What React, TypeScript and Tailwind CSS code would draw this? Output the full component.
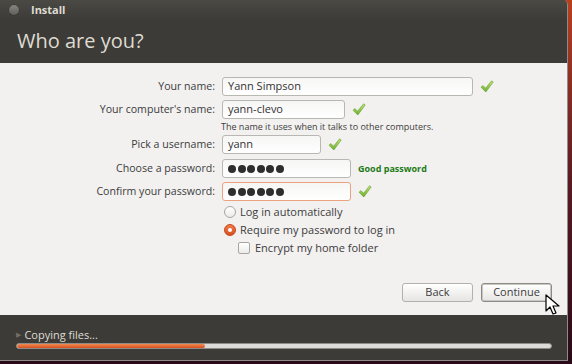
import React from 'react';

const font = { fontFamily: '"Open Sans", "DejaVu Sans", sans-serif' };

const Check = () => (
  <svg width="14" height="13" viewBox="0 0 14 13" className="shrink-0">
    <defs>
      <linearGradient id="ck" x1="0" y1="0" x2="0" y2="1">
        <stop offset="0" stopColor="#c4e77a" />
        <stop offset="1" stopColor="#6aae2a" />
      </linearGradient>
    </defs>
    <path d="M1 7.2 L3 5.6 L5.6 8.2 L11.6 0.8 L13.2 2 L5.8 12 Z" fill="url(#ck)" stroke="#5f9a28" strokeWidth="0.6" strokeLinejoin="round" />
  </svg>
);

const Field = ({ label, width, children, check, extra, orange }: { label: string; width: string; children: React.ReactNode; check?: boolean; extra?: React.ReactNode; orange?: boolean }) => (
  <div className="flex h-[19px] items-center">
    <div className="w-[216px] shrink-0 pr-[1px] text-right text-[10.6px] text-[#3c3c3c]">{label}</div>
    <div className="ml-[6px] flex items-center">
      <div className={`flex h-[19px] ${width} items-center rounded-[3px] border bg-gradient-to-b from-[#f6f6f5] to-white pl-[5px] text-[11px] text-[#333] ${orange ? 'border-[#eca27f]' : 'border-[#b9b7b2]'}`}>
        {children}
      </div>
      {check && <div className="ml-[7px]"><Check /></div>}
      {extra}
    </div>
  </div>
);

const Dots = () => (
  <span className="flex gap-[1.5px]">
    {[0, 1, 2, 3, 4, 5].map((i) => (
      <span key={i} className="h-[8px] w-[8px] rounded-full bg-[#2e2e2e]" />
    ))}
  </span>
);

export default function App() {
  return (
    <div className="relative h-[364px] w-[572px] overflow-hidden bg-gradient-to-b from-[#b8401f] via-[#5a1a22] to-[#2a0a18]" style={font}>
      <div className="flex h-[361px] w-[568px] flex-col overflow-hidden rounded-tr-[5px] border-b border-r border-[#8e8c88] bg-[#3c3b37]">
        {/* title bar */}
        <div className="flex h-[20px] items-center bg-gradient-to-b from-[#4a4944] to-[#3c3b37]">
          <div className="ml-[8px] h-[12px] w-[12px] rounded-full bg-gradient-to-b from-[#8a8883] to-[#5e5c58] shadow-[inset_0_0_0_1px_#35342f]" />
          <div className="ml-[11px] text-[11px] font-bold text-[#dfdbd2]">Install</div>
        </div>
        <div className="flex h-[43px] items-center pb-[2px] pl-[17px] text-[20px] text-[#dfdbd2]">Who are you?</div>

        {/* content */}
        <div className="flex h-[252px] flex-col bg-[#f2f1f0] pt-[14px]">
          <Field label="Your name:" width="w-[251px]" check>Yann Simpson</Field>
          <div className="mt-[4px]">
            <Field label="Your computer's name:" width="w-[123px]" check>yann-clevo</Field>
          </div>
          <div className="flex h-[16px] items-center pl-[221px] pb-[1px] text-[9px] text-[#3c3c3c]">The name it uses when it talks to other computers.</div>
          <Field label="Pick a username:" width="w-[99px]" check>yann</Field>
          <div className="mt-[5px]">
            <Field label="Choose a password:" width="w-[129px]" extra={<span className="ml-[7px] text-[9px] font-bold text-[#1d7a17]">Good password</span>}><Dots /></Field>
          </div>
          <div className="mt-[4px]">
            <Field label="Confirm your password:" width="w-[129px]" check orange><Dots /></Field>
          </div>

          <div className="mt-[2px] flex flex-col pl-[224px] text-[11px] text-[#3c3c3c]">
            <div className="flex h-[18px] items-center">
              <span className="h-[12px] w-[12px] rounded-full border border-[#a8a6a1] bg-gradient-to-b from-white to-[#ecebe9]" />
              <span className="ml-[4px]">Log in automatically</span>
            </div>
            <div className="flex h-[18px] items-center">
              <span className="flex h-[12px] w-[12px] items-center justify-center rounded-full border border-[#c4481c] bg-gradient-to-b from-[#f27a48] to-[#d9501f]">
                <span className="h-[4px] w-[4px] rounded-full bg-white" />
              </span>
              <span className="ml-[4px]">Require my password to log in</span>
            </div>
            <div className="flex h-[18px] items-center pl-[14px]">
              <span className="h-[12px] w-[12px] rounded-[2px] border border-[#a8a6a1] bg-gradient-to-b from-white to-[#ecebe9]" />
              <span className="ml-[5px]">Encrypt my home folder</span>
            </div>
          </div>

          <div className="mt-auto mb-[13px] flex justify-end gap-[8px] pr-[15px] text-[11px] text-[#3c3c3c]">
            <button className="flex h-[19px] w-[71px] items-center justify-center rounded-[3px] border border-[#b3b1ac] bg-gradient-to-b from-white to-[#e6e5e3]">Back</button>
            <button className="flex h-[19px] w-[71px] items-center justify-center rounded-[3px] border border-[#8c8a85] bg-gradient-to-b from-white to-[#e6e5e3] shadow-[inset_0_0_0_1px_#c9c7c2]">Continue</button>
          </div>
        </div>

        {/* bottom progress */}
        <div className="flex flex-1 flex-col pl-[16px] pt-[13px]">
          <div className="flex h-[14px] items-center text-[11px] text-[#dfdbd2]">
            <span className="mr-[3px] text-[7px] text-[#6f6d68]">▶</span>
            Copying files...
          </div>
          <div className="mt-[1px] h-[6px] w-[536px] overflow-hidden rounded-[3px] border border-[#8d8b86] bg-[#dcdbd9]">
            <div className="h-full rounded-[3px] bg-gradient-to-b from-[#f28a50] to-[#d44f1c]" style={{ width: '188px' }} />
          </div>
        </div>
      </div>

      {/* mouse cursor */}
      <svg className="absolute left-[545px] top-[294px]" width="16" height="22" viewBox="0 0 16 22">
        <path d="M1 1 L1 17 L5 13 L8 20 L11 19 L8 12 L14 12 Z" fill="white" stroke="black" strokeWidth="1.2" strokeLinejoin="round" />
      </svg>
    </div>
  );
}
